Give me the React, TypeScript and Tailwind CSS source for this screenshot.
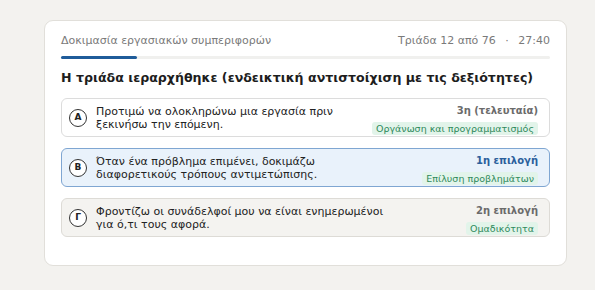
const FONT = { fontFamily: '"DejaVu Sans", "Noto Sans", sans-serif' };

type Option = {
  letter: string;
  text: string[];
  rank: string;
  skill: string;
  tone: 'plain' | 'best' | 'muted';
};

const OPTIONS: Option[] = [
  {
    letter: 'A',
    text: ['Προτιμώ να ολοκληρώνω μια εργασία πριν', 'ξεκινήσω την επόμενη.'],
    rank: '3η (τελευταία)',
    skill: 'Οργάνωση και προγραμματισμός',
    tone: 'plain',
  },
  {
    letter: 'B',
    text: ['Όταν ένα πρόβλημα επιμένει, δοκιμάζω', 'διαφορετικούς τρόπους αντιμετώπισης.'],
    rank: '1η επιλογή',
    skill: 'Επίλυση προβλημάτων',
    tone: 'best',
  },
  {
    letter: 'Γ',
    text: ['Φροντίζω οι συνάδελφοί μου να είναι ενημερωμένοι', 'για ό,τι τους αφορά.'],
    rank: '2η επιλογή',
    skill: 'Ομαδικότητα',
    tone: 'muted',
  },
];

function OptionRow({ opt }: { opt: Option }) {
  const box =
    opt.tone === 'best'
      ? 'border-[#7fa6d2] bg-[#e9f2fb]'
      : opt.tone === 'muted'
        ? 'border-[#dddbd6] bg-[#f4f3f0]'
        : 'border-[#dcdcdc] bg-white';
  const rankColor = opt.tone === 'best' ? 'text-[#2b5f9c]' : 'text-[#6b6b6b]';

  return (
    <div className={`flex h-[39px] items-center rounded-[6px] border pr-[11px] pl-[7px] ${box}`}>
      <div className="flex h-[18px] w-[18px] shrink-0 items-center justify-center rounded-full border-[1.5px] border-[#333] bg-white text-[9px] font-bold text-[#222]">
        {opt.letter}
      </div>
      <div className="ml-[9px] flex-1 text-[11px] leading-[13px] text-[#222]">
        {opt.text.map((line) => (
          <div key={line}>{line}</div>
        ))}
      </div>
      <div className="flex flex-col items-end gap-[5px] self-stretch pt-[5px]">
        <span className={`text-[10px] font-bold leading-[13px] ${rankColor}`}>{opt.rank}</span>
        <span className="rounded-[3px] bg-[#e2f4ea] px-[4px] text-[9.5px] leading-[13px] text-[#2f8a5c]">
          {opt.skill}
        </span>
      </div>
    </div>
  );
}

export default function App() {
  return (
    <div className="h-[290px] w-[595px] bg-[#f3f2ef] pt-[20px] pl-[44px]" style={FONT}>
      <div className="h-[246px] w-[523px] rounded-[9px] border border-[#e1dfda] bg-white px-[16px] pt-[13px]">
        <div className="flex items-center justify-between text-[11px] leading-[13px] text-[#7a7a7a]">
          <span>Δοκιμασία εργασιακών συμπεριφορών</span>
          <span>
            Τριάδα 12 από 76 <span className="mx-[6px]">·</span> 27:40
          </span>
        </div>
        <div className="mt-[9px] h-[3px] w-full rounded-full bg-[#f0f0ee]">
          <div className="h-full w-[76px] rounded-full bg-[#1f5c9a]" />
        </div>
        <h2 className="mt-[11px] text-[12.6px] font-bold leading-[16px] text-[#1d1d1d]">
          Η τριάδα ιεραρχήθηκε (ενδεικτική αντιστοίχιση με τις δεξιότητες)
        </h2>
        <div className="mt-[12px] flex flex-col gap-[11px]">
          {OPTIONS.map((opt) => (
            <OptionRow key={opt.letter} opt={opt} />
          ))}
        </div>
      </div>
    </div>
  );
}
